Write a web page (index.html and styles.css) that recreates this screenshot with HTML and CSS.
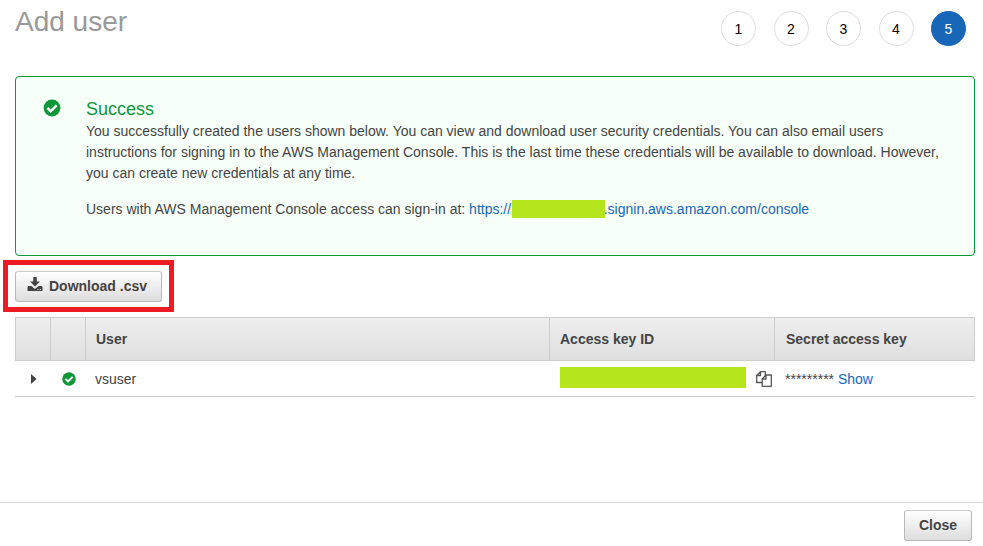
FILE: index.html
```html
<!DOCTYPE html>
<html lang="en">
<head>
<meta charset="utf-8">
<title>Add user</title>
<link rel="stylesheet" href="styles.css">
</head>
<body>
<header class="header">
  <h1 class="title">Add user</h1>
  <ol class="steps">
    <li class="step">1</li>
    <li class="step">2</li>
    <li class="step">3</li>
    <li class="step">4</li>
    <li class="step active">5</li>
  </ol>
</header>
<main class="main">
  <section class="alert">
    <svg class="alert-icon" width="18" height="18" viewBox="0 0 18 18"><circle cx="9" cy="9" r="8.4" fill="#0f9638"/><path d="M4.3 8.9 7.7 12.2 13.7 6.3" fill="none" stroke="#fff" stroke-width="2.5"/></svg>
    <div class="alert-body">
      <h2 class="alert-title">Success</h2>
      <p class="text">You successfully created the users shown below. You can view and download user security credentials. You can also email users<br>instructions for signing in to the AWS Management Console. This is the last time these credentials will be available to download. However,<br>you can create new credentials at any time.</p>
      <p class="text signin">Users with AWS Management Console access can sign-in at:&nbsp;<a class="link url">https://<span class="mask account"></span>.signin.aws.amazon.com/console</a></p>
    </div>
  </section>
  <div class="download">
    <button class="button download-button"><svg class="download-icon" width="16" height="15" viewBox="0 0 16 15"><path fill="#444" d="M6.2 0h3.600v4.400h3.200L8 9.400 3 4.400h3.200zM1.200 9h3.200L8 12l3.600-3h3.200l.700 1v4H.5v-4z"/><path d="M10.500 12.500h1M12.800 12.500h1" stroke="#eee"/></svg>Download .csv</button>
    <span class="highlight"></span>
  </div>
  <table class="table">
    <colgroup><col class="col-toggle"><col class="col-status"><col class="col-user"><col class="col-key"><col class="col-secret"></colgroup>
    <thead>
      <tr><th></th><th></th><th>User</th><th>Access key ID</th><th>Secret access key</th></tr>
    </thead>
    <tbody>
      <tr>
        <td class="toggle"><svg width="6" height="10" viewBox="0 0 6 10"><path d="M0 0 5.500 5 0 10z" fill="#444"/></svg></td>
        <td class="status"><svg width="14" height="14" viewBox="0 0 18 18"><circle cx="9" cy="9" r="8.700" fill="#0f9638"/><path d="M4.300 8.900 7.700 12.200 13.700 6.300" fill="none" stroke="#fff" stroke-width="2.500"/></svg></td>
        <td class="label">vsuser</td>
        <td><div class="key"><span class="mask key-id"></span><svg width="16" height="16" viewBox="0 0 16 16" fill="#fff" stroke="#555" stroke-width="1.300" stroke-linejoin="round"><path d="M4.500.7H9.300v10.800H.7V4.500zM4.500.7v3.800H.7"/><path d="M10 4h5.300v11.300H6.200V8zM10 4v4H6.200"/></svg></div></td>
        <td class="label">********* <a class="link">Show</a></td>
      </tr>
    </tbody>
  </table>
</main>
<footer class="footer"><button class="button close">Close</button></footer>
</body>
</html>
```
FILE: styles.css
```css
* { box-sizing: border-box; }
body {
  margin: 0;
  height: 546px;
  display: flex;
  flex-direction: column;
  overflow: hidden;
  background: #fff;
  color: #444;
  font: 14px/21px "Liberation Sans", Arial, sans-serif;
}
.header {
  height: 76px;
  padding: 0 17px 0 15px;
  display: flex;
  justify-content: space-between;
}
.title {
  margin: 5px 0 0;
  font-size: 28px;
  line-height: 34px;
  font-weight: 400;
  color: #999;
}
.steps {
  display: flex;
  gap: 17.5px;
  margin: 11px 0 0;
  padding: 0;
  list-style: none;
}
.step {
  width: 35px;
  height: 35px;
  border: 1px solid #ddd;
  border-radius: 50%;
  color: #000;
  line-height: 35px;
  text-align: center;
}
.step.active {
  background: #1766b8;
  border-color: #1766b8;
  color: #fff;
}
.main {
  flex: 1;
  padding: 0 8px 0 15px;
}
.alert {
  display: flex;
  height: 180px;
  padding: 22px 0 0 27px;
  border: 1px solid #0f9638;
  border-radius: 4px;
  background: #f7fff9;
}
.alert-icon { flex: none; margin: 0 25px 0 0; }
.alert-body { white-space: nowrap; }
.alert-title {
  margin: 0 0 1px;
  font-size: 18px;
  line-height: 21px;
  font-weight: 400;
  color: #0f9638;
}
.text { margin: 0; }
.signin { margin-top: 15px; display: flex; }
.link { color: #1766b8; }
.url { display: flex; }
.mask { background: #b5e61d; }
.account { width: 93px; height: 18px; margin: 1px -1px 0 .6px; }
.button {
  height: 31px;
  border: 1px solid #b8b8b8;
  border-top-color: #ccc;
  border-radius: 3px;
  background: linear-gradient(#fff, #ddd);
  color: #444;
  font: bold 14px/21px "Liberation Sans", Arial, sans-serif;
}
.download {
  position: relative;
  width: 147px;
  margin-top: 15px;
}
.download-button {
  display: flex;
  align-items: center;
  width: 147px;
  padding: 0 0 0 11px;
  white-space: nowrap;
}
.download-icon { margin: -4px 6px 0 0; }
.highlight {
  position: absolute;
  inset: -11px -12px -10px;
  border: 5px solid #ed1c24;
  pointer-events: none;
}
.table {
  width: 960px;
  margin-top: 15px;
  table-layout: fixed;
  border-collapse: separate;
  border-spacing: 0;
}
.col-toggle, .col-status { width: 35px; }
.col-user { width: 464px; }
.col-key { width: 225px; }
.col-secret { width: 201px; }
th {
  height: 44px;
  padding: 0 0 0 10px;
  border: solid #ccc;
  border-width: 1px 0 1px 1px;
  background: linear-gradient(#eee, #dfdfdf);
  text-align: left;
}
th:last-child { border-right-width: 1px; padding-left: 11px; }
td {
  height: 36px;
  padding: 0 0 0 10px;
  border-bottom: 1px solid #ccc;
}
td:last-child { padding-left: 11px; }
.label { padding-top: 2px; }
td svg { display: block; }
.toggle { padding-left: 16px; }
.status { padding-left: 12px; }
.key { display: flex; align-items: center; gap: 10px; padding-left: 1px; margin-top: -3px; }
.key svg { margin-top: 3px; }
.key-id { width: 186px; height: 21px; }
.footer {
  height: 44px;
  padding: 7px 11px 0 0;
  border-top: 1px solid #d5d5d5;
  display: flex;
  justify-content: flex-end;
}
.close { width: 68px; padding: 0; }
```
